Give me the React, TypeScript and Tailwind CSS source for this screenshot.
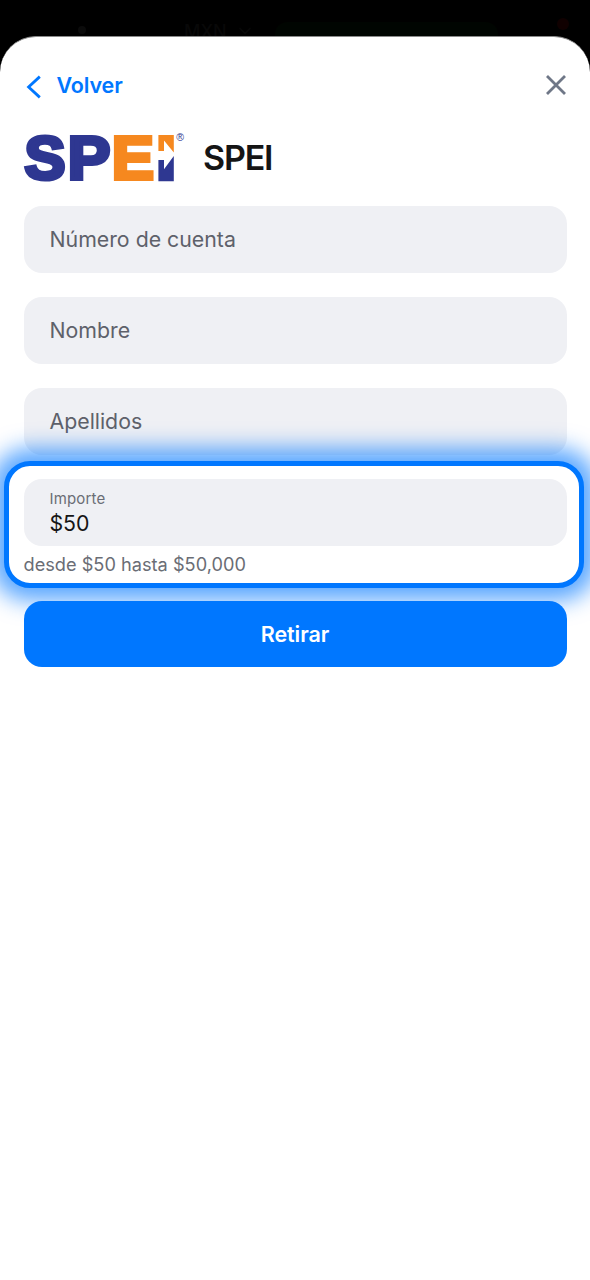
import { FiChevronDown } from "react-icons/fi";

const fields = [
  { id: "account", label: "Número de cuenta" },
  { id: "name", label: "Nombre" },
  { id: "surname", label: "Apellidos" },
];

function SpeiLogo() {
  return (
    <svg className="w-[166px] h-[56px] shrink-0 overflow-visible" viewBox="20 130 166 56" aria-label="SPEI">
      <g fontFamily="Liberation Sans, sans-serif" fontWeight="700" fontSize="61" strokeWidth="4">
        <text x="24.4" y="179.3" fill="#2e3791" stroke="#2e3791" textLength="41" lengthAdjust="spacingAndGlyphs">S</text>
        <text x="67.7" y="179.3" fill="#2e3791" stroke="#2e3791" textLength="42.6" lengthAdjust="spacingAndGlyphs">P</text>
        <text x="111.7" y="179.3" fill="#f6881f" stroke="#f6881f" textLength="42.2" lengthAdjust="spacingAndGlyphs">E</text>
      </g>
      {/* Arrow mark */}
      <path d="M158.4 135h15.4v17.5l-9.8-12v10.5h-5.6z" fill="#f6881f" />
      <path d="M158.4 160h5.6v9.3l9.8-13.3v25.3h-15.4z" fill="#2e3791" />
      <text x="176.3" y="141" fill="#2e3791" fontFamily="Liberation Sans, sans-serif" fontSize="10.5">®</text>
    </svg>
  );
}

export default function App() {
  return (
    <div className="relative h-[1280px] w-[590px] overflow-hidden bg-black font-['Inter',sans-serif]">
      {/* Dimmed page header */}
      <div className="flex h-9 w-full text-[#080808]">
        <div className="ml-[78px] mt-[26px] size-2 shrink-0 rounded-full bg-[#0b0b0b]" />
        <span className="ml-[98px] mt-[22px] text-lg leading-5 font-medium">MXN</span>
        <FiChevronDown className="ml-2 mt-[21px] size-5 shrink-0" />
        <div className="ml-[20px] mt-[22px] h-[14px] w-[223px] shrink-0 rounded-t-xl bg-[#000501]" />
        <div className="ml-[59px] mt-[18px] size-3 shrink-0 rounded-full bg-[#100000]" />
      </div>

      {/* Sheet */}
      <main className="relative h-[1244px] rounded-t-[36px] border-t border-[#8a8a8a] bg-white px-[23.5px] pt-8">
        <div className="flex h-8 items-center justify-between">
          <button className="flex items-center text-[21.5px] leading-8 font-semibold tracking-[-0.1px] text-[#0077ff]">
            <svg className="mt-1 mr-[16px] ml-[1px] h-6 w-4" viewBox="0 0 16 24" fill="none" stroke="currentColor" strokeWidth="2.8">
              <path d="M14.8 1.6 3.6 12l11.2 10.4" />
            </svg>
            Volver
          </button>
          <svg className="mr-[1px] size-5" viewBox="0 0 20 20" fill="none" stroke="#6f7787" strokeWidth="2.8">
            <path d="m1 1 18 18m0-18-18 18" />
          </svg>
        </div>

        <div className="mt-[29px] -ml-[3.5px] flex h-[56px] items-center">
          <SpeiLogo />
          <h1 className="ml-[17px] text-[34px] leading-10 font-semibold tracking-[-1.2px] text-[#151515]">SPEI</h1>
        </div>

        <form className="mt-5">
          <div className="flex flex-col gap-6">
            {fields.map((field) => (
              <div key={field.id} className="flex h-[67px] items-center rounded-[18px] bg-[#eff0f4] px-[26px] pt-px text-[21.3px] text-[#5e616a]">
                {field.label}
              </div>
            ))}
          </div>

          {/* Highlighted amount */}
          <div className="relative -mx-[19.5px] mt-[6px] h-[127px] w-[580px] rounded-[26px] border-[5px] border-[#0077ff] bg-white px-[14.5px] pt-[13px] shadow-[0_0_22px_13px_rgba(0,119,255,0.64)]">
            <div className="flex h-[67px] w-[543px] flex-col rounded-[18px] bg-[#eff0f4] px-[26px] pt-[10px]">
              <span className="text-[15px] leading-5 tracking-[0.15px] text-[#6a6d75]">Importe</span>
              <span className="text-[21.3px] leading-7 tracking-[-0.1px] text-[#151515]">$50</span>
            </div>
            <p className="mt-[5px] text-[18.2px] leading-[26px] text-[#6a6d75]">desde $50 hasta $50,000</p>
          </div>

          <button type="button" className="relative mt-[13px] h-[66px] w-full rounded-[18px] bg-[#0077ff] text-[21.5px] font-semibold tracking-[-0.05px] text-white">
            Retirar
          </button>
        </form>
      </main>
    </div>
  );
}
